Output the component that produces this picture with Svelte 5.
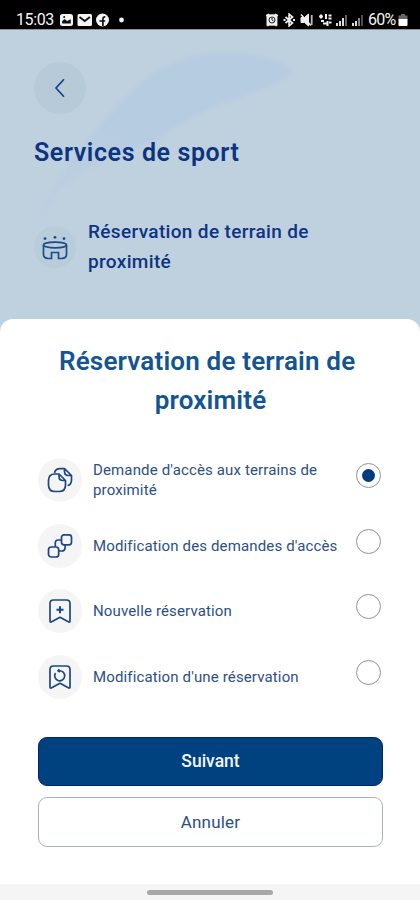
<script lang="ts">
  type IconName = 'documents' | 'blocks' | 'bookmark-add' | 'bookmark-edit';

  interface Option {
    id: string;
    label: string;
    icon: IconName;
  }

  const options: Option[] = [
    { id: 'request', label: "Demande d'accès aux terrains de proximité", icon: 'documents' },
    { id: 'edit-request', label: "Modification des demandes d'accès", icon: 'blocks' },
    { id: 'new', label: 'Nouvelle réservation', icon: 'bookmark-add' },
    { id: 'edit', label: "Modification d'une réservation", icon: 'bookmark-edit' },
  ];

  let selected = $state('request');
</script>

<div class="screen">
  <div class="status-bar">
    <span class="time">15:03</span>
    <svg class="notifications" width="66" height="14" viewBox="0 0 66 14">
      <rect x="0" y="1" width="13" height="12" rx="2.5" fill="#f4f4f4" />
      <path d="M2.2 10.5V8l2.5-2 2.3 2 3.8-1.8v4.3z" fill="#111" />
      <circle cx="4.2" cy="4" r="1" fill="#111" />
      <rect x="17.5" y="1" width="14.5" height="12" rx="1.5" fill="#f4f4f4" />
      <path d="M19.5 4l5.2 4 5.2-4" fill="none" stroke="#111" stroke-width="1.8" />
      <circle cx="42.5" cy="7" r="6.5" fill="#f4f4f4" />
      <path d="M42.9 13V6.2c0-1.7.8-2.4 2.4-2.3M39.4 8h5.8" fill="none" stroke="#111" stroke-width="1.7" />
      <circle cx="61.5" cy="7" r="2.4" fill="#f4f4f4" />
    </svg>
    <svg class="system" width="98" height="14" viewBox="0 0 98 14">
      <g fill="none" stroke="#eee" stroke-width="1.4">
        <rect x="1.2" y="2" width="9.5" height="10" fill="#eee" />
        <path d="M0 3l3-2M9 1l3 2M1 12l1.5 1M11 12l-1.5 1" />
        <circle cx="6" cy="7" r="3" stroke="#222" stroke-width="1" />
        <path d="M6 5v2l1.5 1" stroke="#222" stroke-width="1" />
        <path d="M19.5 4l7 6-3.4 2.8V1.2L26.5 4l-7 6" stroke-width="1.7" />
        <path d="M17.5 7h2M27 7h2" stroke-width="2.2" />
        <path d="M35 4.5h3.500l4-3.500v12L38.500 9.500H35z" fill="#eee" stroke-width="1" />
        <path d="M35 1.500l10 11" stroke-width="1.600" />
        <path d="M45.700 2v10" stroke="#bbb" stroke-width="1.800" />
        <path d="M55 1.500v4M53 3.500h4M60 1v5M62.500 2.500h3M62.500 5.500h3M55 8h3M57 10.500h3.500M61.500 8v5M63 9.500h2.500" stroke-width="2" />
      </g>
      <g fill="#ddd">
        <rect x="70" y="10" width="2" height="3" />
        <rect x="73" y="8" width="2" height="5" />
        <rect x="76" y="5" width="2" height="8" />
        <rect x="79" y="2" width="2" height="11" opacity=".45" />
        <rect x="86" y="10" width="2" height="3" />
        <rect x="89" y="8" width="2" height="5" />
        <rect x="92" y="5" width="2" height="8" opacity=".6" />
        <rect x="95" y="2" width="2" height="11" opacity=".35" />
      </g>
    </svg>
    <span class="percent">60%</span>
    <svg width="10" height="14" viewBox="0 0 10 14">
      <path d="M3 1h4v1.5h2.5V7h-9V2.5H3z" fill="#666" />
      <path d="M.5 6h9v6a1 1 0 0 1-1 1h-7a1 1 0 0 1-1-1z" fill="#fff" />
    </svg>
  </div>

  <header class="backdrop">
    <svg class="swoosh" width="420" height="289" viewBox="0 0 420 289">
      <defs>
        <linearGradient id="swoosh-fill" x1="0" y1="1" x2="1" y2="0">
          <stop offset="0" stop-color="#b5cbe2" stop-opacity=".15" />
          <stop offset=".45" stop-color="#b5cbe2" stop-opacity=".85" />
          <stop offset="1" stop-color="#b5cbe2" stop-opacity=".85" />
        </linearGradient>
        <filter id="swoosh-soften" x="-10%" y="-10%" width="120%" height="120%">
          <feGaussianBlur stdDeviation="2.5" />
        </filter>
      </defs>
      <path
        d="M33 197C52 152 85 108 126 67c20-20 37-33 66-41 36-8 82-2 101 15-14 14-45 24-73 34-32 12-55 32-79 41-32 12-64 25-83 47z"
        fill="url(#swoosh-fill)"
        filter="url(#swoosh-soften)"
      />
    </svg>

    <button class="back" aria-label="Retour">
      <svg width="14" height="22" viewBox="0 0 14 22">
        <path d="M11 2.2L3 11l8 8.8" fill="none" stroke="#15418a" stroke-width="1.7" />
      </svg>
    </button>
    <h1>Services de sport</h1>
    <div class="service">
      <span class="service-icon">
        <svg width="28" height="28" viewBox="0 0 28 28">
          <g fill="none" stroke="#1c4a8c" stroke-width="1.7">
            <ellipse cx="14" cy="12" rx="11.5" ry="2.8" />
            <path d="M2.5 12v9.500c0 2.500 2 3.800 5 4h3v-6h7v6h3c3-.2 5-1.500 5-4V12" />
          </g>
          <g fill="#1c4a8c">
            <circle cx="4" cy="5.6" r="1.4" />
            <circle cx="14" cy="4.3" r="1.4" />
            <circle cx="23" cy="5.6" r="1.4" />
          </g>
        </svg>
      </span>
      <span class="service-name">Réservation de terrain de proximité</span>
    </div>
  </header>

  <section class="sheet">
    <h2>Réservation de terrain de&nbsp;<br />proximité</h2>

    <div class="options" role="radiogroup">
      {#each options as option (option.id)}
        <button
          class="option"
          role="radio"
          aria-checked={selected === option.id}
          onclick={() => (selected = option.id)}
        >
          <span class="option-icon">
            <svg width="28" height="28" viewBox="0 0 28 28">
              {#if option.icon === 'documents'}
                <path d="M8.5 7c.6-3 2.500-4.300 5.500-4.300h4.500L25.500 9.500V14c0 3-1.200 5-4 5.500M18.500 2.700V5.500c0 2.700 1.300 4 4 4h3" />
                <path d="M13 8H9c-4.500 0-6.500 2-6.500 6.500v4.500c0 4.500 2 6.500 6.500 6.500h4c4.500 0 6.500-2 6.500-6.500v-4.500L13 8zM13 8v2.500c0 2.700 1.300 4 4 4h2.500" />
              {:else if option.icon === 'blocks'}
                <rect x="15.5" y="2.8" width="10" height="10" rx="2.5" />
                <path d="M15.5 8h-3.300c-2 0-2.900.9-2.900 2.800v4M12.700 19h2.800c2.300 0 3.600-1 3.600-3.300v-2.900" />
                <rect x="2.5" y="15" width="10.2" height="10" rx="2.8" />
              {:else}
                <path d="M4 24V6.500c0-2.500 1.200-3.500 3.500-3.500h13C22.800 3 24 4 24 6.500V24c0 1.200-.7 1.400-1.700.8L14 20.300 5.700 24.800C4.700 25.400 4 25.200 4 24z" />
                {#if option.icon === 'bookmark-add'}
                  <path d="M14 9.200v7M10.500 12.700h7" stroke-width="2" />
                {:else}
                  <path d="M13 7.800a5 5 0 1 1-3.500 2.200M13.300 6.200L12 7.800l1.800 1.300" />
                {/if}
              {/if}
            </svg>
          </span>
          <span class="option-label">{option.label}</span>
          <span class="radio" class:checked={selected === option.id}></span>
        </button>
      {/each}
    </div>

    <div class="actions">
      <button class="primary">Suivant</button>
      <button class="secondary">Annuler</button>
    </div>
  </section>

  <div class="nav-bar"><span></span></div>
</div>

<style>
  :global(body) {
    margin: 0;
  }

  .screen {
    display: flex;
    flex-direction: column;
    width: 420px;
    height: 900px;
    overflow: hidden;
    box-sizing: border-box;
    background: #bfd1df;
    font-family: Roboto, 'Liberation Sans', sans-serif;
  }

  button {
    margin: 0;
    padding: 0;
    border: 0;
    background: none;
    font: inherit;
    color: inherit;
  }

  svg {
    display: block;
    flex: none;
  }

  .status-bar {
    flex: none;
    display: flex;
    align-items: center;
    box-sizing: border-box;
    height: 30px;
    padding: 10px 12px 0 16px;
    border-bottom: 1px solid #8a929b;
    background: #000;
    color: #f4f4f4;
    font-size: 16px;
    line-height: 19px;
  }

  .time {
    width: 44px;
    letter-spacing: -0.4px;
  }

  .system {
    margin-left: auto;
  }

  .percent {
    width: 28px;
    margin: 0 2px 0 4px;
    letter-spacing: -0.8px;
  }

  .backdrop {
    position: relative;
    flex: none;
    box-sizing: border-box;
    height: 289px;
    padding: 32px 34px 0;
    color: #0d3480;
  }

  .swoosh {
    position: absolute;
    inset: 0;
  }

  .back {
    position: relative;
    display: flex;
    align-items: center;
    justify-content: center;
    width: 52px;
    height: 52px;
    border-radius: 50%;
    background: #b7cad8;
  }

  h1 {
    position: relative;
    margin: 24px 0 0;
    font-size: 25px;
    font-weight: 600;
    line-height: 30px;
    letter-spacing: 0.6px;
    white-space: nowrap;
  }

  .service {
    position: relative;
    display: flex;
    align-items: center;
    gap: 12px;
    margin-top: 49px;
  }

  .service-icon {
    display: flex;
    align-items: center;
    justify-content: center;
    width: 42px;
    height: 42px;
    border-radius: 50%;
    background: #b9ccda;
  }

  .service-name {
    width: 250px;
    font-size: 19px;
    font-weight: 500;
    line-height: 30px;
    letter-spacing: 0.34px;
  }

  .sheet {
    flex: 1;
    box-sizing: border-box;
    padding: 23px 37px 0 38px;
    border-radius: 13px 13px 0 0;
    background: #fff;
  }

  h2 {
    margin: 0;
    color: #135493;
    font-size: 26px;
    font-weight: 600;
    line-height: 39px;
    letter-spacing: 0.18px;
    text-align: center;
    white-space: nowrap;
  }

  .options {
    display: flex;
    flex-direction: column;
    gap: 21.5px;
    margin-top: 38px;
  }

  .option {
    display: flex;
    align-items: center;
    height: 44px;
    padding-right: 2px;
    color: #2c4f86;
    text-align: left;
  }

  .option-icon {
    display: flex;
    align-items: center;
    justify-content: center;
    width: 44px;
    height: 44px;
    border-radius: 50%;
    background: #f5f5f5;
  }

  .option-icon svg {
    fill: none;
    stroke: #1b4787;
    stroke-width: 1.7;
    stroke-linejoin: round;
  }

  .option-label {
    width: 252px;
    margin-left: 11px;
    font-size: 15px;
    line-height: 20px;
    letter-spacing: 0.14px;
  }

  .radio {
    display: flex;
    align-items: center;
    justify-content: center;
    box-sizing: border-box;
    width: 25px;
    height: 25px;
    margin: 0 0 9px auto;
    border: 1px solid #8c9499;
    border-radius: 50%;
  }

  .radio.checked::after {
    content: '';
    width: 13px;
    height: 13px;
    border-radius: 50%;
    background: #013b80;
  }

  .actions {
    display: flex;
    flex-direction: column;
    gap: 11px;
    margin-top: 38px;
  }

  .primary,
  .secondary {
    box-sizing: border-box;
    height: 49px;
    border-radius: 9px;
  }

  .primary {
    border: 1px solid #00226f;
    background: #00417f;
    color: #f2f5fb;
    font-size: 17.5px;
    font-weight: 500;
  }

  .secondary {
    height: 50px;
    border: 1px solid #a9b3b5;
    color: #2c4f86;
    font-size: 17px;
    letter-spacing: 0.2px;
  }

  .nav-bar {
    flex: none;
    display: flex;
    justify-content: center;
    box-sizing: border-box;
    height: 16px;
    padding-top: 6px;
    background: #f5f5f5;
  }

  .nav-bar span {
    width: 126px;
    height: 5px;
    border-radius: 3px;
    background: #a8a8a8;
  }
</style>
